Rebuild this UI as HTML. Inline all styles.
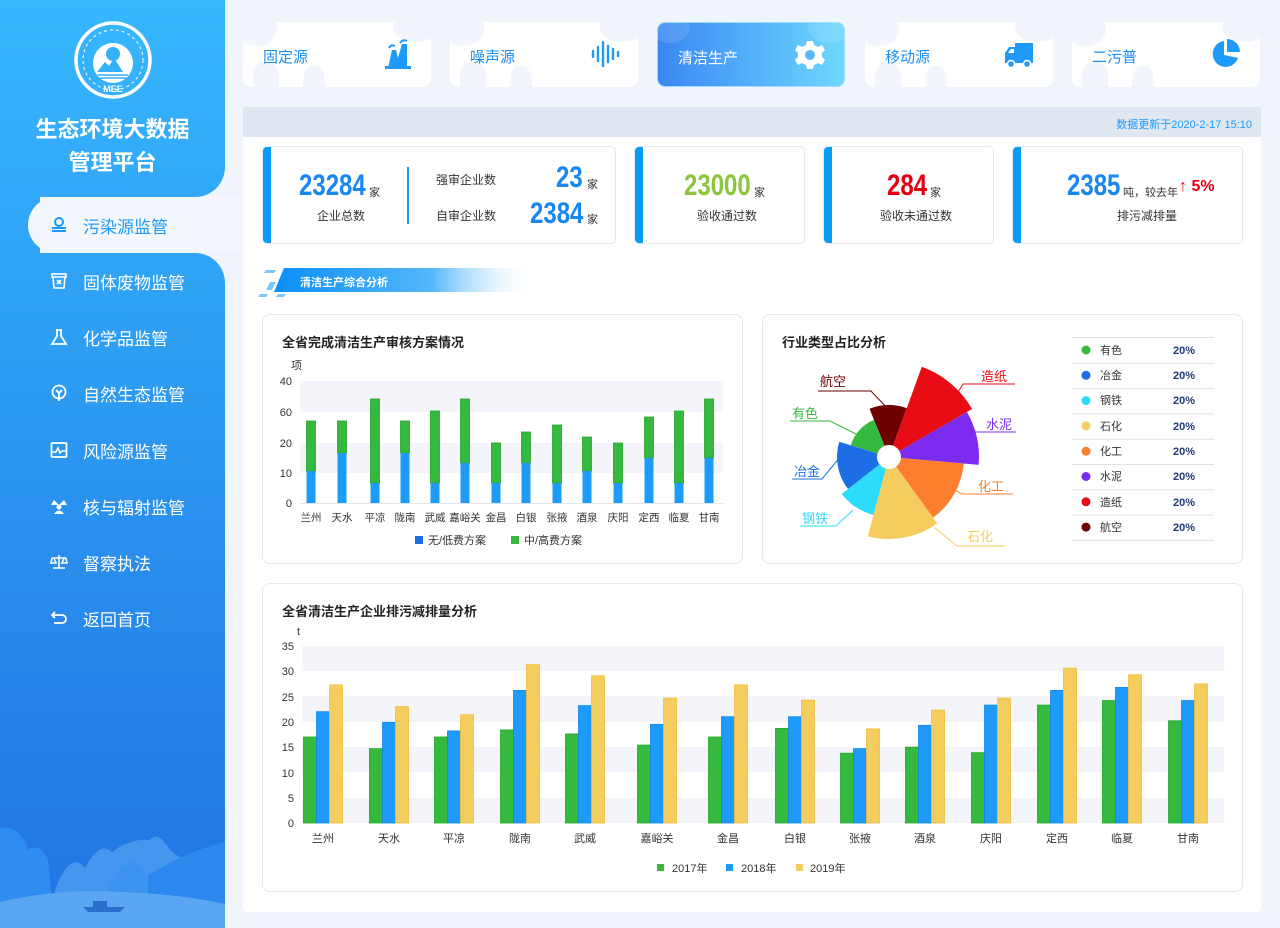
<!DOCTYPE html>
<html><head><meta charset="utf-8">
<style>
*{margin:0;padding:0;box-sizing:border-box}
body{width:1280px;height:928px;overflow:hidden;background:#f0f5fc;font-family:"Liberation Sans","Noto Sans CJK SC",sans-serif;position:relative;color:#333}
.abs{position:absolute}
.sb{background:linear-gradient(180deg,#37b7fe 0%,#2d9cf2 40%,#2580e8 80%,#2374e2 100%);background-size:225px 928px;background-attachment:fixed}
.menu{position:absolute;left:0;width:225px;height:56px;display:flex;align-items:center;color:#fff;font-size:17px}
.menu svg{position:absolute;left:50px}
.menu span{position:absolute;left:83px}
.tab{position:absolute;top:22px;width:188px;height:65px;background:#fff;border-radius:8px;overflow:hidden}
.tab .t{position:absolute;left:20px;top:24px;font-size:15px;color:#1e8ef0}
.tab svg.ic{position:absolute;right:18px;top:16px}
.cl{position:absolute;border-radius:50%;background:#f2f6fc}
.card{position:absolute;top:146px;height:98px;background:#fff;border:1px solid #e3e8f1;border-radius:5px;overflow:hidden}
.card:before{content:"";position:absolute;left:0;top:0;bottom:0;width:8px;background:#0a9cf5}
.num{position:absolute;font-family:"Liberation Sans",sans-serif;font-weight:bold;font-size:30px;line-height:30px;transform:scaleX(.8);transform-origin:left center;white-space:nowrap}
.u{position:absolute;font-size:11px;color:#333;white-space:nowrap}
.lbl{font-size:12px;color:#333}
.panel{position:absolute;background:#fff;border:1px solid #e3e8f1;border-radius:8px}
.ptitle{position:absolute;left:19px;font-size:13px;font-weight:bold;color:#222}
</style></head><body>

<div class="abs sb" style="left:0;top:0;width:225px;height:197px;border-bottom-right-radius:30px"></div>
<div class="abs sb" style="left:0;top:196px;width:40px;height:58px"></div>
<div class="abs" style="left:28px;top:197px;width:220px;height:56px;background:#f3f7fd;border-radius:28px 0 0 28px"></div>
<div class="abs sb" style="left:0;top:253px;width:225px;height:675px;border-top-right-radius:30px"></div>
<svg class="abs" style="left:0;top:780px" width="225" height="148">
<path d="M0 48 Q20 45 28 70 Q40 62 48 80 L55 150 L0 150Z" fill="#2f8cf0"/>
<path d="M55 110 Q70 70 85 88 Q100 60 112 72 Q130 58 150 60 Q158 50 170 70 L183 80 L190 150 L55 150Z" fill="#4f9ef1" opacity=".8"/>
<path d="M108 110 Q120 80 135 82 Q148 90 150 110 L150 150 L108 150Z" fill="#3d93f0"/>
<path d="M148 95 Q190 70 225 62 L225 150 L148 150Z" fill="#2c88ee"/>
<path d="M0 122 Q60 108 120 112 Q180 114 225 124 L225 148 L0 148Z" fill="#5aa6f3"/>
<path d="M83 127 L125 127 L120 132 L88 132Z" fill="#2a6fd0"/><rect x="93" y="121" width="14" height="6" fill="#2a6fd0"/>
</svg>
<svg class="abs" style="left:73px;top:20px" width="80" height="80">
<circle cx="40" cy="40" r="37" fill="none" stroke="#fff" stroke-width="3.5"/>
<circle cx="40" cy="40" r="30" fill="none" stroke="#fff" stroke-width="1" stroke-dasharray="3 3"/>
<circle cx="40" cy="43" r="20" fill="#fff"/>
<circle cx="40" cy="34" r="7" fill="#35b0fb"/>
<path d="M24 52 L32 42 L36 46 L41 38 L50 52Z" fill="#35b0fb"/>
<path d="M25 55 H55 M27 58 H53" stroke="#35b0fb" stroke-width="1.5"/>
<text x="40" y="72" font-size="9" font-weight="bold" fill="#fff" text-anchor="middle" font-family="Liberation Sans">MEE</text>
</svg>
<div class="abs" style="left:0;width:225px;top:113px;text-align:center;color:#fff;font-size:22px;line-height:33px;font-weight:bold">生态环境大数据<br>管理平台</div>

<div class="menu" style="top:197px;color:#1e9bf8"><svg width="18" height="18" viewBox="0 0 18 18"><circle cx="9" cy="6" r="4" fill="none" stroke="#1e9bf8" stroke-width="2"/><path d="M2 12h14M2 15h14" stroke="#1e9bf8" stroke-width="2"/></svg><span>污染源监管</span></div>
<div class="menu" style="top:253px"><svg width="18" height="18"><rect x="2" y="2" width="14" height="3" fill="none" stroke="#fff" stroke-width="1.6"/><path d="M3 5 L4 16 H14 L15 5 M7 8 L11 12 M11 8 L7 12" fill="none" stroke="#fff" stroke-width="1.6"/></svg><span>固体废物监管</span></div>
<div class="menu" style="top:309px"><svg width="18" height="18"><path d="M6 2 H12 M7 2 V8 L2 16 H16 L11 8 V2" fill="none" stroke="#fff" stroke-width="1.8"/></svg><span>化学品监管</span></div>
<div class="menu" style="top:365px"><svg width="18" height="18"><circle cx="9" cy="8" r="6.5" fill="none" stroke="#fff" stroke-width="1.8"/><path d="M9 17 V9 M6 6 L9 9 L12 6" fill="none" stroke="#fff" stroke-width="1.8"/></svg><span>自然生态监管</span></div>
<div class="menu" style="top:422px"><svg width="18" height="18"><rect x="1.5" y="2" width="15" height="14" rx="1" fill="none" stroke="#fff" stroke-width="1.8"/><path d="M2 11 H6 L8 7 L10 12 L12 10 H16" fill="none" stroke="#fff" stroke-width="1.6"/></svg><span>风险源监管</span></div>
<div class="menu" style="top:478px"><svg width="18" height="18"><path d="M9 8 L4 3 L1 8Z M9 8 L14 3 L17 8Z" fill="#fff"/><circle cx="9" cy="10" r="2.5" fill="#fff"/><path d="M4 17 Q9 10 14 17Z" fill="#fff"/></svg><span>核与辐射监管</span></div>
<div class="menu" style="top:534px"><svg width="18" height="18"><path d="M9 2 V15 M3 15 H15 M2 5 H16 M2 5 L1 10 H6 L4 5 M14 5 L12 10 H17 L16 5" fill="none" stroke="#fff" stroke-width="1.6"/></svg><span>督察执法</span></div>
<div class="menu" style="top:590px"><svg width="18" height="18"><path d="M5 3 L2 6 L5 9 M2 6 H12 A4 4 0 0 1 12 14 H4" fill="none" stroke="#fff" stroke-width="1.8"/></svg><span>返回首页</span></div>

<div class="tab" style="left:243px"><div class="cl" style="left:-6px;top:-10px;width:40px;height:34px"></div><div class="cl" style="left:150px;top:-10px;width:45px;height:30px"></div><div class="cl" style="left:10px;top:40px;width:26px;height:40px;border-radius:40% 40% 0 0"></div><div class="cl" style="left:60px;top:44px;width:22px;height:40px;border-radius:40% 40% 0 0"></div><div class="t">固定源</div>
<svg class="ic" width="30" height="32"><path d="M5 30 L9 12 H13 L15 20 L19 6 H24 L24 30Z" fill="#1e9bf8"/><path d="M17 5 Q20 1 24 3 M6 10 Q8 6 12 8" stroke="#1e9bf8" stroke-width="2" fill="none"/><rect x="2" y="28" width="26" height="3" fill="#1e9bf8"/></svg></div>
<div class="tab" style="left:450px"><div class="cl" style="left:-6px;top:-10px;width:40px;height:34px"></div><div class="cl" style="left:150px;top:-10px;width:45px;height:30px"></div><div class="cl" style="left:10px;top:40px;width:26px;height:40px;border-radius:40% 40% 0 0"></div><div class="cl" style="left:60px;top:44px;width:22px;height:40px;border-radius:40% 40% 0 0"></div><div class="t">噪声源</div>
<svg class="ic" width="30" height="32"><g stroke="#1e9bf8" stroke-width="2.4" stroke-linecap="round"><path d="M3 13V19M8 9V23M13 4V28M18 8V24M23 11V21M28 14V18"/></g></svg></div>
<div class="tab" style="left:657px;background:linear-gradient(90deg,#3a87f4,#6ed8fe);border:1px solid #9fdcfd"><div class="cl" style="left:-8px;top:-14px;width:40px;height:34px;background:rgba(255,255,255,.12)"></div><div class="cl" style="left:150px;top:-10px;width:45px;height:30px;background:rgba(255,255,255,.12)"></div><div class="t" style="color:#fff">清洁生产</div>
<svg class="ic" width="32" height="32" viewBox="0 0 32 32"><path d="M13 2h6l1 4 4 2 4-2 3 5-3 3v4l3 3-3 5-4-2-4 2-1 4h-6l-1-4-4-2-4 2-3-5 3-3v-4l-3-3 3-5 4 2 4-2z" fill="#fff"/><circle cx="16" cy="16" r="5" fill="#5bb7fb"/></svg></div>
<div class="tab" style="left:865px"><div class="cl" style="left:-6px;top:-10px;width:40px;height:34px"></div><div class="cl" style="left:150px;top:-10px;width:45px;height:30px"></div><div class="cl" style="left:10px;top:40px;width:26px;height:40px;border-radius:40% 40% 0 0"></div><div class="cl" style="left:60px;top:44px;width:22px;height:40px;border-radius:40% 40% 0 0"></div><div class="t">移动源</div>
<svg class="ic" width="32" height="32"><path d="M12 5 H30 V25 H2 V15 L6 9 H12Z" fill="#1e9bf8"/><path d="M5 15 L8 11 H11 V15Z" fill="#fff"/><circle cx="8" cy="26" r="3.5" fill="#1e9bf8" stroke="#fff" stroke-width="1.5"/><circle cx="24" cy="26" r="3.5" fill="#1e9bf8" stroke="#fff" stroke-width="1.5"/></svg></div>
<div class="tab" style="left:1072px"><div class="cl" style="left:-6px;top:-10px;width:40px;height:34px"></div><div class="cl" style="left:150px;top:-10px;width:45px;height:30px"></div><div class="cl" style="left:10px;top:40px;width:26px;height:40px;border-radius:40% 40% 0 0"></div><div class="cl" style="left:60px;top:44px;width:22px;height:40px;border-radius:40% 40% 0 0"></div><div class="t">二污普</div>
<svg class="ic" width="32" height="32"><path d="M14 3 A13 13 0 1 0 28 20 L14 17Z" fill="#1e9bf8"/><path d="M17 1 A13 13 0 0 1 30 14 L17 14Z" fill="#1e9bf8"/></svg></div>

<div class="abs" style="left:243px;top:107px;width:1018px;height:805px;background:#fff;border-radius:4px"></div>
<div class="abs" style="left:243px;top:107px;width:1018px;height:30px;background:#dfe7f3"></div>
<div class="abs" style="right:28px;top:116px;font-size:11px;color:#1e9bf8">数据更新于2020-2-17 15:10</div>

<div class="card" style="left:262px;width:354px">
 <div class="num" style="left:36px;top:24px;color:#1a86f0">23284</div><div class="u" style="left:106px;top:37px">家</div>
 <div class="abs lbl" style="left:54px;top:60px">企业总数</div>
 <div class="abs" style="left:144px;top:20px;width:2px;height:57px;background:#1e9bf8"></div>
 <div class="abs lbl" style="left:173px;top:24px">强审企业数</div>
 <div class="abs lbl" style="left:173px;top:60px">自审企业数</div>
 <div class="num" style="left:293px;top:16px;color:#1a86f0">23</div><div class="u" style="left:324px;top:29px">家</div>
 <div class="num" style="left:267px;top:52px;color:#1a86f0">2384</div><div class="u" style="left:324px;top:64px">家</div>
</div>
<div class="card" style="left:634px;width:171px">
 <div class="num" style="left:49px;top:24px;color:#8cc63f">23000</div><div class="u" style="left:119px;top:37px">家</div>
 <div class="abs lbl" style="left:62px;top:60px">验收通过数</div>
</div>
<div class="card" style="left:823px;width:171px">
 <div class="num" style="left:63px;top:24px;color:#e60012">284</div><div class="u" style="left:106px;top:37px">家</div>
 <div class="abs lbl" style="left:56px;top:60px">验收未通过数</div>
</div>
<div class="card" style="left:1012px;width:231px">
 <div class="num" style="left:54px;top:24px;color:#1a86f0">2385</div><div class="u" style="left:110px;top:37px">吨，较去年</div>
 <div class="abs" style="left:166px;top:31px;color:#e60012;font-weight:bold;font-size:16px;white-space:nowrap">↑ 5%</div>
 <div class="abs lbl" style="left:104px;top:60px">排污减排量</div>
</div>

<svg class="abs" style="left:258px;top:264px" width="290" height="36">
<defs><linearGradient id="hg" x1="0" x2="1"><stop offset="0" stop-color="#0a8ef5"/><stop offset=".6" stop-color="#55b8fb"/><stop offset="1" stop-color="#fff" stop-opacity="0"/></linearGradient></defs>
<path d="M26 4 H280 V28 H16Z" fill="url(#hg)"/>
<path d="M8 6h10l-2 3H6z M2 30h8l-2 3H0z M20 30h8l-2 3h-8z M12 18h6l-4 8H8z" fill="#7cc8fb"/>
</svg>
<div class="abs" style="left:300px;top:274px;font-size:11px;font-weight:bold;color:#fff">清洁生产综合分析</div>

<div class="panel" style="left:262px;top:314px;width:481px;height:250px"><div class="ptitle" style="top:17px">全省完成清洁生产审核方案情况</div></div>
<div class="panel" style="left:762px;top:314px;width:481px;height:250px"><div class="ptitle" style="top:17px">行业类型占比分析</div></div>
<div class="panel" style="left:262px;top:583px;width:981px;height:309px"><div class="ptitle" style="top:17px">全省清洁生产企业排污减排量分析</div></div>

<svg id="ch" class="abs" style="left:0;top:0" width="1280" height="928" font-family="Liberation Sans,Noto Sans CJK SC,sans-serif">
<g id="g1"></g>
<g font-size="11" fill="#333" text-anchor="end">
<text x="292" y="385">40</text><text x="292" y="416">60</text><text x="292" y="447">20</text><text x="292" y="477">10</text><text x="292" y="507">0</text>
</g>
<text x="291" y="369" font-size="11" fill="#333">项</text>
<g font-size="10.5" fill="#333" text-anchor="middle">
<text x="311" y="521">兰州</text><text x="342" y="521">天水</text><text x="375" y="521">平凉</text><text x="405" y="521">陇南</text><text x="435" y="521">武威</text><text x="465" y="521">嘉峪关</text><text x="496" y="521">金昌</text><text x="526" y="521">白银</text><text x="557" y="521">张掖</text><text x="587" y="521">酒泉</text><text x="618" y="521">庆阳</text><text x="649" y="521">定西</text><text x="679" y="521">临夏</text><text x="709" y="521">甘南</text>
</g>
<rect x="415" y="536" width="8" height="8" fill="#1d6de5"/><text x="428" y="544" font-size="11" fill="#333">无/低费方案</text>
<rect x="511" y="536" width="8" height="8" fill="#36b93f"/><text x="524" y="544" font-size="11" fill="#333">中/高费方案</text>

<g id="rose"></g>
<circle cx="889" cy="457" r="12" fill="#fff"/>
<g fill="none" stroke-width="1">
<path d="M818 391 H871 L889 410" stroke="#6e0000"/>
<path d="M790 421 H830 L856 434" stroke="#36b93f"/>
<path d="M792 479 H822 L840 457" stroke="#1d6de5"/>
<path d="M800 526 H836 L853 510" stroke="#2ddcfb"/>
<path d="M1005 546 H957 L935 528" stroke="#f5cd5f"/>
<path d="M1013 494 H962 L952 488" stroke="#fd7f2d"/>
<path d="M1016 432 H975" stroke="#7b2cf0"/>
<path d="M1015 384 H963 L957 394" stroke="#e80c14"/>
</g>
<g font-size="13">
<text x="820" y="386" fill="#6e0000">航空</text>
<text x="792" y="418" fill="#36b93f">有色</text>
<text x="794" y="476" fill="#1d6de5">冶金</text>
<text x="802" y="523" fill="#2ddcfb">钢铁</text>
<text x="967" y="541" fill="#f5cd5f">石化</text>
<text x="978" y="491" fill="#fd7f2d">化工</text>
<text x="986" y="429" fill="#7b2cf0">水泥</text>
<text x="981" y="381" fill="#e80c14">造纸</text>
</g>
<g id="leg"></g>

<g id="g2"></g>
<text x="297" y="635" font-size="11" fill="#333">t</text>
<g font-size="11" fill="#333" text-anchor="middle">
<text x="323" y="842">兰州</text><text x="389" y="842">天水</text><text x="454" y="842">平凉</text><text x="520" y="842">陇南</text><text x="585" y="842">武威</text><text x="657" y="842">嘉峪关</text><text x="728" y="842">金昌</text><text x="795" y="842">白银</text><text x="860" y="842">张掖</text><text x="925" y="842">酒泉</text><text x="991" y="842">庆阳</text><text x="1057" y="842">定西</text><text x="1122" y="842">临夏</text><text x="1188" y="842">甘南</text>
</g>
<rect x="657" y="864" width="7" height="7" fill="#36b93f"/><text x="672" y="872" font-size="11" fill="#333">2017年</text>
<rect x="726" y="864" width="7" height="7" fill="#1e9bf8"/><text x="741" y="872" font-size="11" fill="#333">2018年</text>
<rect x="796" y="864" width="7" height="7" fill="#f5cd5f"/><text x="810" y="872" font-size="11" fill="#333">2019年</text>
<g font-size="11" fill="#333" text-anchor="end">
<text x="294" y="650">35</text><text x="294" y="675">30</text><text x="294" y="701">25</text><text x="294" y="726">20</text><text x="294" y="751">15</text><text x="294" y="777">10</text><text x="294" y="802">5</text><text x="294" y="827">0</text>
</g>
<g font-size="11" text-anchor="middle">
<text x="1111" y="354" fill="#333">有色</text><text x="1111" y="379" fill="#333">冶金</text><text x="1111" y="404" fill="#333">钢铁</text><text x="1111" y="430" fill="#333">石化</text><text x="1111" y="455" fill="#333">化工</text><text x="1111" y="480" fill="#333">水泥</text><text x="1111" y="506" fill="#333">造纸</text><text x="1111" y="531" fill="#333">航空</text>
</g>
<g font-size="11" font-weight="bold" fill="#1f3a74" text-anchor="middle">
<text x="1184" y="354">20%</text><text x="1184" y="379">20%</text><text x="1184" y="404">20%</text><text x="1184" y="430">20%</text><text x="1184" y="455">20%</text><text x="1184" y="480">20%</text><text x="1184" y="506">20%</text><text x="1184" y="531">20%</text>
</g>
</svg>

<script>
var NS="http://www.w3.org/2000/svg";
function el(p,t,a){var e=document.createElementNS(NS,t);for(var k in a)e.setAttribute(k,a[k]);p.appendChild(e);return e;}
var g1=document.getElementById('g1');
el(g1,'rect',{x:300,y:381,width:423,height:31,fill:'#f3f5fa'});
el(g1,'rect',{x:300,y:443,width:423,height:30,fill:'#f3f5fa'});
el(g1,'line',{x1:300,y1:503.5,x2:723,y2:503.5,stroke:'#dfe5ee'});
var xs=[311,342,375,405,435,465,496,526,557,587,618,649,679,709];
var tops=[421,421,399,421,411,399,443,432,425,437,443,417,411,399];
var bl=[471,453,483,453,483,463,483,463,483,471,483,458,483,458];
for(var i=0;i<14;i++){
 el(g1,'rect',{x:xs[i]-4.5,y:tops[i],width:9,height:bl[i]-tops[i],fill:'#36b93f',stroke:'#21a52b','stroke-width':.8});
 el(g1,'rect',{x:xs[i]-4.5,y:bl[i],width:9,height:503-bl[i],fill:'#1e9bf8'});
}
var rose=document.getElementById('rose');var cx=889,cy=457;
var sl=[[-112,-70,52,'#6e0000'],[-70,-30,96,'#e80c14'],[-30,5,90,'#7b2cf0'],[5,54,75,'#fd7f2d'],[54,105,82,'#f5cd5f'],[105,142,60,'#2ddcfb'],[142,197,52,'#1d6de5'],[197,248,40,'#36b93f']];
sl.forEach(function(s){var a1=s[0]*Math.PI/180,a2=s[1]*Math.PI/180,r=s[2];
 var x1=cx+r*Math.cos(a1),y1=cy+r*Math.sin(a1),x2=cx+r*Math.cos(a2),y2=cy+r*Math.sin(a2);
 el(rose,'path',{d:'M'+cx+' '+cy+' L'+x1+' '+y1+' A'+r+' '+r+' 0 0 1 '+x2+' '+y2+' Z',fill:s[3]});});
var leg=document.getElementById('leg');var lc=['#36b93f','#1d6de5','#2ddcfb','#f5cd5f','#fd7f2d','#7b2cf0','#e80c14','#6e0000'];
el(leg,'line',{x1:1072,y1:337.5,x2:1214,y2:337.5,stroke:'#dde3ec'});
for(var i=0;i<8;i++){var y=338+i*25.3;
 el(leg,'circle',{cx:1086,cy:y+12,r:4.5,fill:lc[i]});
 el(leg,'line',{x1:1072,y1:y+25.3,x2:1214,y2:y+25.3,stroke:'#dde3ec'});}
var g2=document.getElementById('g2');
[[646,671],[696,722],[747,772],[798,823]].forEach(function(b){el(g2,'rect',{x:302,y:b[0],width:922,height:b[1]-b[0],fill:'#f3f5fa'});});
var cx2=[323,389,454,520,585,657,728,795,860,925,991,1057,1122,1188];
var v=[[17,22,27.3],[14.7,19.9,23],[17,18.2,21.4],[18.4,26.2,31.3],[17.6,23.2,29.1],[15.4,19.5,24.7],[17,21,27.3],[18.7,21,24.3],[13.8,14.7,18.6],[15,19.3,22.3],[13.9,23.3,24.7],[23.3,26.2,30.6],[24.2,26.8,29.3],[20.2,24.2,27.5]];
var cc=['#36b93f','#1e9bf8','#f5cd5f'],sc=['#21a52b','#0f86ea','#efbf3c'];
for(var i=0;i<14;i++)for(var j=0;j<3;j++){var h=v[i][j]*5.06;
 el(g2,'rect',{x:cx2[i]-19.5+j*13,y:823-h,width:13,height:h,fill:cc[j],stroke:sc[j],'stroke-width':.8});}
</script>
</body></html>
